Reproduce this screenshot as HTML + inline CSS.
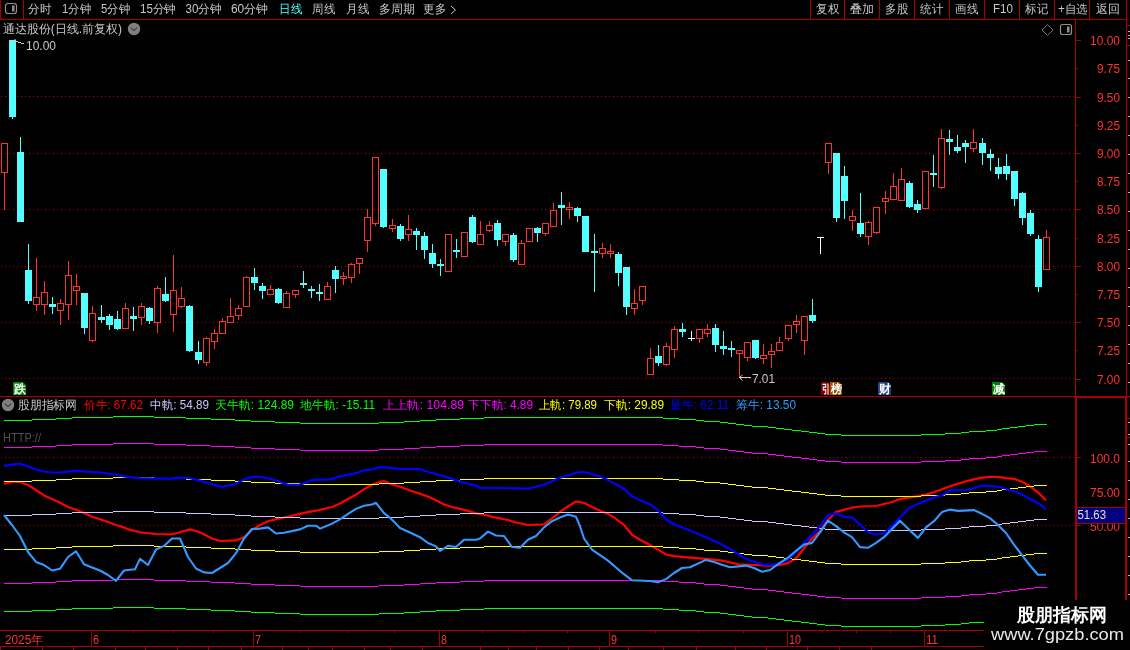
<!DOCTYPE html>
<html><head><meta charset="utf-8">
<style>
html,body{margin:0;padding:0;background:#000;width:1130px;height:650px;overflow:hidden}
svg{display:block}
text{font-family:"Liberation Sans",sans-serif;-webkit-font-smoothing:antialiased;will-change:transform;}
</style></head><body>
<svg width="1130" height="650" viewBox="0 0 1130 650">
<rect width="1130" height="650" fill="#000"/>
<line x1="1" y1="96.5" x2="1075" y2="96.5" stroke="#b40000" stroke-width="1" stroke-dasharray="1 3"/>
<line x1="1" y1="153.5" x2="1075" y2="153.5" stroke="#b40000" stroke-width="1" stroke-dasharray="1 3"/>
<line x1="1" y1="209.5" x2="1075" y2="209.5" stroke="#b40000" stroke-width="1" stroke-dasharray="1 3"/>
<line x1="1" y1="266.5" x2="1075" y2="266.5" stroke="#b40000" stroke-width="1" stroke-dasharray="1 3"/>
<line x1="1" y1="322.5" x2="1075" y2="322.5" stroke="#b40000" stroke-width="1" stroke-dasharray="1 3"/>
<line x1="1" y1="378.5" x2="1075" y2="378.5" stroke="#b40000" stroke-width="1" stroke-dasharray="1 3"/>
<line x1="1" y1="457.5" x2="1075" y2="457.5" stroke="#b40000" stroke-width="1" stroke-dasharray="1 3"/>
<line x1="1" y1="525.5" x2="1075" y2="525.5" stroke="#b40000" stroke-width="1" stroke-dasharray="1 3"/>
<rect x="4.0" y="172" width="1" height="38" fill="#ff3232"/>
<rect x="1.5" y="143.5" width="6" height="29" fill="none" stroke="#ff3232" stroke-width="1"/>
<rect x="12.0" y="40" width="1" height="79" fill="#54ffff"/>
<rect x="9" y="40" width="7" height="77" fill="#54ffff"/>
<rect x="20.0" y="137" width="1" height="85" fill="#54ffff"/>
<rect x="17" y="152" width="7" height="70" fill="#54ffff"/>
<rect x="28.0" y="244" width="1" height="60" fill="#54ffff"/>
<rect x="25" y="270" width="7" height="31" fill="#54ffff"/>
<rect x="36.0" y="258" width="1" height="39" fill="#ff3232"/>
<rect x="36.0" y="304" width="1" height="7" fill="#ff3232"/>
<rect x="33.5" y="297.5" width="6" height="7" fill="none" stroke="#ff3232" stroke-width="1"/>
<rect x="44.0" y="281" width="1" height="11" fill="#ff3232"/>
<rect x="44.0" y="304" width="1" height="11" fill="#ff3232"/>
<rect x="41.5" y="292.5" width="6" height="12" fill="none" stroke="#ff3232" stroke-width="1"/>
<rect x="52.0" y="297" width="1" height="17" fill="#54ffff"/>
<rect x="49" y="304" width="7" height="3" fill="#54ffff"/>
<rect x="60.0" y="299" width="1" height="4" fill="#ff3232"/>
<rect x="60.0" y="310" width="1" height="15" fill="#ff3232"/>
<rect x="57.5" y="303.5" width="6" height="7" fill="none" stroke="#ff3232" stroke-width="1"/>
<rect x="68.0" y="261" width="1" height="14" fill="#ff3232"/>
<rect x="68.0" y="304" width="1" height="16" fill="#ff3232"/>
<rect x="65.5" y="275.5" width="6" height="29" fill="none" stroke="#ff3232" stroke-width="1"/>
<rect x="76.0" y="274" width="1" height="12" fill="#ff3232"/>
<rect x="76.0" y="290" width="1" height="15" fill="#ff3232"/>
<rect x="73.5" y="286.5" width="6" height="4" fill="none" stroke="#ff3232" stroke-width="1"/>
<rect x="84.0" y="293" width="1" height="41" fill="#54ffff"/>
<rect x="81" y="293" width="7" height="35" fill="#54ffff"/>
<rect x="92.0" y="306" width="1" height="7" fill="#ff3232"/>
<rect x="92.0" y="340" width="1" height="2" fill="#ff3232"/>
<rect x="89.5" y="313.5" width="6" height="27" fill="none" stroke="#ff3232" stroke-width="1"/>
<rect x="101.0" y="305" width="1" height="18" fill="#54ffff"/>
<rect x="98" y="317" width="7" height="3" fill="#54ffff"/>
<rect x="109.0" y="314" width="1" height="16" fill="#54ffff"/>
<rect x="106" y="316" width="7" height="9" fill="#54ffff"/>
<rect x="117.0" y="311" width="1" height="19" fill="#54ffff"/>
<rect x="114" y="319" width="7" height="10" fill="#54ffff"/>
<rect x="125.0" y="303" width="1" height="5" fill="#ff3232"/>
<rect x="122.5" y="308.5" width="6" height="20" fill="none" stroke="#ff3232" stroke-width="1"/>
<rect x="133.0" y="307" width="1" height="24" fill="#54ffff"/>
<rect x="130" y="316" width="7" height="3" fill="#54ffff"/>
<rect x="141.0" y="303" width="1" height="3" fill="#ff3232"/>
<rect x="141.0" y="317" width="1" height="8" fill="#ff3232"/>
<rect x="138.5" y="306.5" width="6" height="11" fill="none" stroke="#ff3232" stroke-width="1"/>
<rect x="149.0" y="307" width="1" height="17" fill="#54ffff"/>
<rect x="146" y="308" width="7" height="13" fill="#54ffff"/>
<rect x="157.0" y="286" width="1" height="2" fill="#ff3232"/>
<rect x="157.0" y="322" width="1" height="11" fill="#ff3232"/>
<rect x="154.5" y="288.5" width="6" height="34" fill="none" stroke="#ff3232" stroke-width="1"/>
<rect x="165.0" y="277" width="1" height="25" fill="#54ffff"/>
<rect x="162" y="294" width="7" height="7" fill="#54ffff"/>
<rect x="173.0" y="255" width="1" height="35" fill="#ff3232"/>
<rect x="173.0" y="314" width="1" height="18" fill="#ff3232"/>
<rect x="170.5" y="290.5" width="6" height="24" fill="none" stroke="#ff3232" stroke-width="1"/>
<rect x="181.0" y="287" width="1" height="11" fill="#ff3232"/>
<rect x="181.0" y="306" width="1" height="2" fill="#ff3232"/>
<rect x="178.5" y="298.5" width="6" height="8" fill="none" stroke="#ff3232" stroke-width="1"/>
<rect x="189.0" y="305" width="1" height="47" fill="#54ffff"/>
<rect x="186" y="306" width="7" height="45" fill="#54ffff"/>
<rect x="198.0" y="341" width="1" height="23" fill="#54ffff"/>
<rect x="195" y="352" width="7" height="8" fill="#54ffff"/>
<rect x="206.0" y="337" width="1" height="1" fill="#ff3232"/>
<rect x="206.0" y="362" width="1" height="4" fill="#ff3232"/>
<rect x="203.5" y="338.5" width="6" height="24" fill="none" stroke="#ff3232" stroke-width="1"/>
<rect x="214.0" y="329" width="1" height="4" fill="#ff3232"/>
<rect x="214.0" y="341" width="1" height="8" fill="#ff3232"/>
<rect x="211.5" y="333.5" width="6" height="8" fill="none" stroke="#ff3232" stroke-width="1"/>
<rect x="222.0" y="318" width="1" height="3" fill="#ff3232"/>
<rect x="222.0" y="333" width="1" height="1" fill="#ff3232"/>
<rect x="219.5" y="321.5" width="6" height="12" fill="none" stroke="#ff3232" stroke-width="1"/>
<rect x="230.0" y="298" width="1" height="18" fill="#ff3232"/>
<rect x="230.0" y="322" width="1" height="1" fill="#ff3232"/>
<rect x="227.5" y="316.5" width="6" height="6" fill="none" stroke="#ff3232" stroke-width="1"/>
<rect x="238.0" y="305" width="1" height="3" fill="#ff3232"/>
<rect x="238.0" y="315" width="1" height="5" fill="#ff3232"/>
<rect x="235.5" y="308.5" width="6" height="7" fill="none" stroke="#ff3232" stroke-width="1"/>
<rect x="246.0" y="276" width="1" height="1" fill="#ff3232"/>
<rect x="243.5" y="277.5" width="6" height="29" fill="none" stroke="#ff3232" stroke-width="1"/>
<rect x="254.0" y="268" width="1" height="22" fill="#54ffff"/>
<rect x="251" y="277" width="7" height="6" fill="#54ffff"/>
<rect x="262.0" y="283" width="1" height="16" fill="#54ffff"/>
<rect x="259" y="286" width="7" height="5" fill="#54ffff"/>
<rect x="270.0" y="285" width="1" height="4" fill="#ff3232"/>
<rect x="267.5" y="289.5" width="6" height="5" fill="none" stroke="#ff3232" stroke-width="1"/>
<rect x="278.0" y="288" width="1" height="16" fill="#54ffff"/>
<rect x="275" y="289" width="7" height="14" fill="#54ffff"/>
<rect x="286.0" y="291" width="1" height="2" fill="#ff3232"/>
<rect x="286.0" y="307" width="1" height="1" fill="#ff3232"/>
<rect x="283.5" y="293.5" width="6" height="14" fill="none" stroke="#ff3232" stroke-width="1"/>
<rect x="295.0" y="294" width="1" height="4" fill="#ff3232"/>
<rect x="292.5" y="290.5" width="6" height="4" fill="none" stroke="#ff3232" stroke-width="1"/>
<rect x="303.0" y="271" width="1" height="17" fill="#54ffff"/>
<rect x="300" y="283" width="7" height="2" fill="#54ffff"/>
<rect x="311.0" y="286" width="1" height="12" fill="#54ffff"/>
<rect x="308" y="289" width="7" height="2" fill="#54ffff"/>
<rect x="319.0" y="284" width="1" height="17" fill="#54ffff"/>
<rect x="316" y="292" width="7" height="2" fill="#54ffff"/>
<rect x="327.0" y="282" width="1" height="4" fill="#ff3232"/>
<rect x="324.5" y="286.5" width="6" height="13" fill="none" stroke="#ff3232" stroke-width="1"/>
<rect x="335.0" y="266" width="1" height="27" fill="#54ffff"/>
<rect x="332" y="270" width="7" height="9" fill="#54ffff"/>
<rect x="343.0" y="272" width="1" height="4" fill="#ff3232"/>
<rect x="343.0" y="278" width="1" height="7" fill="#ff3232"/>
<rect x="340.5" y="276.5" width="6" height="2" fill="none" stroke="#ff3232" stroke-width="1"/>
<rect x="351.0" y="263" width="1" height="1" fill="#ff3232"/>
<rect x="351.0" y="277" width="1" height="6" fill="#ff3232"/>
<rect x="348.5" y="264.5" width="6" height="13" fill="none" stroke="#ff3232" stroke-width="1"/>
<rect x="359.0" y="263" width="1" height="11" fill="#ff3232"/>
<rect x="356.5" y="258.5" width="6" height="5" fill="none" stroke="#ff3232" stroke-width="1"/>
<rect x="367.0" y="209" width="1" height="8" fill="#ff3232"/>
<rect x="367.0" y="240" width="1" height="12" fill="#ff3232"/>
<rect x="364.5" y="217.5" width="6" height="23" fill="none" stroke="#ff3232" stroke-width="1"/>
<rect x="375.0" y="223" width="1" height="3" fill="#ff3232"/>
<rect x="372.5" y="157.5" width="6" height="66" fill="none" stroke="#ff3232" stroke-width="1"/>
<rect x="383.0" y="169" width="1" height="59" fill="#54ffff"/>
<rect x="380" y="169" width="7" height="58" fill="#54ffff"/>
<rect x="392.0" y="219" width="1" height="6" fill="#ff3232"/>
<rect x="392.0" y="228" width="1" height="4" fill="#ff3232"/>
<rect x="389.5" y="225.5" width="6" height="3" fill="none" stroke="#ff3232" stroke-width="1"/>
<rect x="400.0" y="224" width="1" height="17" fill="#54ffff"/>
<rect x="397" y="226" width="7" height="13" fill="#54ffff"/>
<rect x="408.0" y="215" width="1" height="14" fill="#ff3232"/>
<rect x="408.0" y="234" width="1" height="7" fill="#ff3232"/>
<rect x="405.5" y="229.5" width="6" height="5" fill="none" stroke="#ff3232" stroke-width="1"/>
<rect x="416.0" y="228" width="1" height="22" fill="#54ffff"/>
<rect x="413" y="231" width="7" height="4" fill="#54ffff"/>
<rect x="424.0" y="232" width="1" height="27" fill="#54ffff"/>
<rect x="421" y="236" width="7" height="14" fill="#54ffff"/>
<rect x="432.0" y="244" width="1" height="24" fill="#54ffff"/>
<rect x="429" y="253" width="7" height="11" fill="#54ffff"/>
<rect x="440.0" y="259" width="1" height="17" fill="#54ffff"/>
<rect x="437" y="264" width="7" height="2" fill="#54ffff"/>
<rect x="448.0" y="271" width="1" height="1" fill="#ff3232"/>
<rect x="445.5" y="234.5" width="6" height="37" fill="none" stroke="#ff3232" stroke-width="1"/>
<rect x="456.0" y="239" width="1" height="19" fill="#54ffff"/>
<rect x="453" y="250" width="7" height="2" fill="#54ffff"/>
<rect x="464.0" y="256" width="1" height="1" fill="#ff3232"/>
<rect x="461.5" y="232.5" width="6" height="24" fill="none" stroke="#ff3232" stroke-width="1"/>
<rect x="472.0" y="215" width="1" height="28" fill="#54ffff"/>
<rect x="469" y="217" width="7" height="25" fill="#54ffff"/>
<rect x="480.0" y="221" width="1" height="13" fill="#ff3232"/>
<rect x="480.0" y="244" width="1" height="1" fill="#ff3232"/>
<rect x="477.5" y="234.5" width="6" height="10" fill="none" stroke="#ff3232" stroke-width="1"/>
<rect x="489.0" y="221" width="1" height="4" fill="#ff3232"/>
<rect x="489.0" y="230" width="1" height="2" fill="#ff3232"/>
<rect x="486.5" y="225.5" width="6" height="5" fill="none" stroke="#ff3232" stroke-width="1"/>
<rect x="497.0" y="220" width="1" height="26" fill="#54ffff"/>
<rect x="494" y="223" width="7" height="17" fill="#54ffff"/>
<rect x="505.0" y="241" width="1" height="5" fill="#ff3232"/>
<rect x="502.5" y="234.5" width="6" height="7" fill="none" stroke="#ff3232" stroke-width="1"/>
<rect x="513.0" y="233" width="1" height="29" fill="#54ffff"/>
<rect x="510" y="235" width="7" height="25" fill="#54ffff"/>
<rect x="521.0" y="240" width="1" height="3" fill="#ff3232"/>
<rect x="518.5" y="243.5" width="6" height="21" fill="none" stroke="#ff3232" stroke-width="1"/>
<rect x="526.5" y="228.5" width="6" height="13" fill="none" stroke="#ff3232" stroke-width="1"/>
<rect x="537.0" y="227" width="1" height="15" fill="#54ffff"/>
<rect x="534" y="228" width="7" height="5" fill="#54ffff"/>
<rect x="545.0" y="233" width="1" height="3" fill="#ff3232"/>
<rect x="542.5" y="223.5" width="6" height="10" fill="none" stroke="#ff3232" stroke-width="1"/>
<rect x="553.0" y="203" width="1" height="7" fill="#ff3232"/>
<rect x="550.5" y="210.5" width="6" height="16" fill="none" stroke="#ff3232" stroke-width="1"/>
<rect x="561.0" y="192" width="1" height="33" fill="#54ffff"/>
<rect x="558" y="205" width="7" height="3" fill="#54ffff"/>
<rect x="569.0" y="202" width="1" height="5" fill="#ff3232"/>
<rect x="569.0" y="209" width="1" height="10" fill="#ff3232"/>
<rect x="566.5" y="207.5" width="6" height="2" fill="none" stroke="#ff3232" stroke-width="1"/>
<rect x="577.0" y="207" width="1" height="15" fill="#54ffff"/>
<rect x="574" y="208" width="7" height="8" fill="#54ffff"/>
<rect x="585.0" y="216" width="1" height="36" fill="#54ffff"/>
<rect x="582" y="216" width="7" height="36" fill="#54ffff"/>
<rect x="594.0" y="234" width="1" height="58" fill="#54ffff"/>
<rect x="591" y="251" width="7" height="2" fill="#54ffff"/>
<rect x="602.0" y="243" width="1" height="5" fill="#ff3232"/>
<rect x="602.0" y="253" width="1" height="5" fill="#ff3232"/>
<rect x="599.5" y="248.5" width="6" height="5" fill="none" stroke="#ff3232" stroke-width="1"/>
<rect x="610.0" y="244" width="1" height="7" fill="#ff3232"/>
<rect x="610.0" y="253" width="1" height="5" fill="#ff3232"/>
<rect x="607.5" y="251.5" width="6" height="2" fill="none" stroke="#ff3232" stroke-width="1"/>
<rect x="618.0" y="252" width="1" height="34" fill="#54ffff"/>
<rect x="615" y="254" width="7" height="19" fill="#54ffff"/>
<rect x="626.0" y="267" width="1" height="48" fill="#54ffff"/>
<rect x="623" y="267" width="7" height="40" fill="#54ffff"/>
<rect x="634.0" y="289" width="1" height="14" fill="#ff3232"/>
<rect x="634.0" y="308" width="1" height="7" fill="#ff3232"/>
<rect x="631.5" y="303.5" width="6" height="5" fill="none" stroke="#ff3232" stroke-width="1"/>
<rect x="642.0" y="300" width="1" height="5" fill="#ff3232"/>
<rect x="639.5" y="286.5" width="6" height="14" fill="none" stroke="#ff3232" stroke-width="1"/>
<rect x="650.0" y="348" width="1" height="10" fill="#ff3232"/>
<rect x="647.5" y="358.5" width="6" height="16" fill="none" stroke="#ff3232" stroke-width="1"/>
<rect x="658.0" y="345" width="1" height="21" fill="#54ffff"/>
<rect x="655" y="356" width="7" height="7" fill="#54ffff"/>
<rect x="666.0" y="343" width="1" height="3" fill="#ff3232"/>
<rect x="666.0" y="364" width="1" height="2" fill="#ff3232"/>
<rect x="663.5" y="346.5" width="6" height="18" fill="none" stroke="#ff3232" stroke-width="1"/>
<rect x="674.0" y="326" width="1" height="3" fill="#ff3232"/>
<rect x="674.0" y="349" width="1" height="9" fill="#ff3232"/>
<rect x="671.5" y="329.5" width="6" height="20" fill="none" stroke="#ff3232" stroke-width="1"/>
<rect x="682.0" y="323" width="1" height="14" fill="#54ffff"/>
<rect x="679" y="329" width="7" height="3" fill="#54ffff"/>
<rect x="691.0" y="331" width="1" height="10" fill="#ffffff"/>
<rect x="688" y="338" width="7" height="1" fill="#ffffff"/>
<rect x="699.0" y="338" width="1" height="5" fill="#ff3232"/>
<rect x="696.5" y="329.5" width="6" height="9" fill="none" stroke="#ff3232" stroke-width="1"/>
<rect x="707.0" y="324" width="1" height="5" fill="#ff3232"/>
<rect x="707.0" y="333" width="1" height="4" fill="#ff3232"/>
<rect x="704.5" y="329.5" width="6" height="4" fill="none" stroke="#ff3232" stroke-width="1"/>
<rect x="715.0" y="324" width="1" height="28" fill="#54ffff"/>
<rect x="712" y="328" width="7" height="17" fill="#54ffff"/>
<rect x="723.0" y="331" width="1" height="24" fill="#54ffff"/>
<rect x="720" y="346" width="7" height="3" fill="#54ffff"/>
<rect x="731.0" y="341" width="1" height="16" fill="#54ffff"/>
<rect x="728" y="348" width="7" height="2" fill="#54ffff"/>
<rect x="739.0" y="353" width="1" height="25" fill="#ff3232"/>
<rect x="736.5" y="350.5" width="6" height="3" fill="none" stroke="#ff3232" stroke-width="1"/>
<rect x="747.0" y="357" width="1" height="4" fill="#ff3232"/>
<rect x="744.5" y="342.5" width="6" height="15" fill="none" stroke="#ff3232" stroke-width="1"/>
<rect x="755.0" y="340" width="1" height="19" fill="#54ffff"/>
<rect x="752" y="340" width="7" height="18" fill="#54ffff"/>
<rect x="763.0" y="344" width="1" height="11" fill="#ff3232"/>
<rect x="763.0" y="358" width="1" height="6" fill="#ff3232"/>
<rect x="760.5" y="355.5" width="6" height="3" fill="none" stroke="#ff3232" stroke-width="1"/>
<rect x="771.0" y="344" width="1" height="7" fill="#ff3232"/>
<rect x="771.0" y="354" width="1" height="14" fill="#ff3232"/>
<rect x="768.5" y="351.5" width="6" height="3" fill="none" stroke="#ff3232" stroke-width="1"/>
<rect x="779.0" y="337" width="1" height="5" fill="#ff3232"/>
<rect x="776.5" y="342.5" width="6" height="8" fill="none" stroke="#ff3232" stroke-width="1"/>
<rect x="788.0" y="338" width="1" height="3" fill="#ff3232"/>
<rect x="785.5" y="325.5" width="6" height="13" fill="none" stroke="#ff3232" stroke-width="1"/>
<rect x="796.0" y="315" width="1" height="6" fill="#ff3232"/>
<rect x="796.0" y="324" width="1" height="9" fill="#ff3232"/>
<rect x="793.5" y="321.5" width="6" height="3" fill="none" stroke="#ff3232" stroke-width="1"/>
<rect x="804.0" y="340" width="1" height="15" fill="#ff3232"/>
<rect x="801.5" y="316.5" width="6" height="24" fill="none" stroke="#ff3232" stroke-width="1"/>
<rect x="812.0" y="299" width="1" height="24" fill="#54ffff"/>
<rect x="809" y="315" width="7" height="6" fill="#54ffff"/>
<rect x="820.0" y="237" width="1" height="17" fill="#ffffff"/>
<rect x="817" y="237" width="7" height="1" fill="#ffffff"/>
<rect x="828.0" y="162" width="1" height="12" fill="#ff3232"/>
<rect x="825.5" y="143.5" width="6" height="19" fill="none" stroke="#ff3232" stroke-width="1"/>
<rect x="836.0" y="153" width="1" height="69" fill="#54ffff"/>
<rect x="833" y="153" width="7" height="65" fill="#54ffff"/>
<rect x="844.0" y="166" width="1" height="53" fill="#54ffff"/>
<rect x="841" y="176" width="7" height="25" fill="#54ffff"/>
<rect x="852.0" y="210" width="1" height="6" fill="#ff3232"/>
<rect x="852.0" y="220" width="1" height="11" fill="#ff3232"/>
<rect x="849.5" y="216.5" width="6" height="4" fill="none" stroke="#ff3232" stroke-width="1"/>
<rect x="860.0" y="193" width="1" height="44" fill="#54ffff"/>
<rect x="857" y="223" width="7" height="11" fill="#54ffff"/>
<rect x="868.0" y="221" width="1" height="1" fill="#ff3232"/>
<rect x="868.0" y="236" width="1" height="9" fill="#ff3232"/>
<rect x="865.5" y="222.5" width="6" height="14" fill="none" stroke="#ff3232" stroke-width="1"/>
<rect x="876.0" y="232" width="1" height="2" fill="#ff3232"/>
<rect x="873.5" y="207.5" width="6" height="25" fill="none" stroke="#ff3232" stroke-width="1"/>
<rect x="885.0" y="191" width="1" height="7" fill="#ff3232"/>
<rect x="885.0" y="201" width="1" height="13" fill="#ff3232"/>
<rect x="882.5" y="198.5" width="6" height="3" fill="none" stroke="#ff3232" stroke-width="1"/>
<rect x="893.0" y="173" width="1" height="13" fill="#ff3232"/>
<rect x="893.0" y="199" width="1" height="1" fill="#ff3232"/>
<rect x="890.5" y="186.5" width="6" height="13" fill="none" stroke="#ff3232" stroke-width="1"/>
<rect x="901.0" y="168" width="1" height="11" fill="#ff3232"/>
<rect x="898.5" y="179.5" width="6" height="21" fill="none" stroke="#ff3232" stroke-width="1"/>
<rect x="909.0" y="181" width="1" height="27" fill="#54ffff"/>
<rect x="906" y="183" width="7" height="24" fill="#54ffff"/>
<rect x="917.0" y="200" width="1" height="13" fill="#54ffff"/>
<rect x="914" y="204" width="7" height="6" fill="#54ffff"/>
<rect x="922.5" y="171.5" width="6" height="37" fill="none" stroke="#ff3232" stroke-width="1"/>
<rect x="933.0" y="155" width="1" height="32" fill="#54ffff"/>
<rect x="930" y="173" width="7" height="2" fill="#54ffff"/>
<rect x="941.0" y="129" width="1" height="9" fill="#ff3232"/>
<rect x="941.0" y="187" width="1" height="2" fill="#ff3232"/>
<rect x="938.5" y="138.5" width="6" height="49" fill="none" stroke="#ff3232" stroke-width="1"/>
<rect x="949.0" y="130" width="1" height="25" fill="#54ffff"/>
<rect x="946" y="139" width="7" height="3" fill="#54ffff"/>
<rect x="957.0" y="135" width="1" height="18" fill="#54ffff"/>
<rect x="954" y="147" width="7" height="4" fill="#54ffff"/>
<rect x="965.0" y="140" width="1" height="23" fill="#54ffff"/>
<rect x="962" y="143" width="7" height="4" fill="#54ffff"/>
<rect x="973.0" y="129" width="1" height="13" fill="#ff3232"/>
<rect x="973.0" y="148" width="1" height="4" fill="#ff3232"/>
<rect x="970.5" y="142.5" width="6" height="6" fill="none" stroke="#ff3232" stroke-width="1"/>
<rect x="982.0" y="138" width="1" height="27" fill="#54ffff"/>
<rect x="979" y="143" width="7" height="10" fill="#54ffff"/>
<rect x="990.0" y="149" width="1" height="22" fill="#54ffff"/>
<rect x="987" y="154" width="7" height="4" fill="#54ffff"/>
<rect x="998.0" y="158" width="1" height="21" fill="#54ffff"/>
<rect x="995" y="167" width="7" height="7" fill="#54ffff"/>
<rect x="1006.0" y="154" width="1" height="26" fill="#54ffff"/>
<rect x="1003" y="166" width="7" height="8" fill="#54ffff"/>
<rect x="1014.0" y="171" width="1" height="35" fill="#54ffff"/>
<rect x="1011" y="171" width="7" height="28" fill="#54ffff"/>
<rect x="1022.0" y="192" width="1" height="33" fill="#54ffff"/>
<rect x="1019" y="193" width="7" height="25" fill="#54ffff"/>
<rect x="1030.0" y="210" width="1" height="26" fill="#54ffff"/>
<rect x="1027" y="213" width="7" height="21" fill="#54ffff"/>
<rect x="1038.0" y="235" width="1" height="57" fill="#54ffff"/>
<rect x="1035" y="239" width="7" height="48" fill="#54ffff"/>
<rect x="1046.0" y="230" width="1" height="7" fill="#ff3232"/>
<rect x="1043.5" y="237.5" width="6" height="32" fill="none" stroke="#ff3232" stroke-width="1"/>
<polyline points="4,483.8 12,481.9 20,482.0 28,485.0 36,490.0 44,495.4 52,499.0 60,502.8 68,507.0 76,509.7 84,513.0 92,516.8 100,519.3 108,522.0 116,525.0 124,527.4 130,529.9 140,532.3 156,534.0 172,534.3 180,532.3 190,529.4 200,532.3 212,538.5 220,541.0 236,540.4 244,537.2 252,529.9 260,525.0 268,521.2 276,519.3 284,517.5 292,515.8 300,513.9 308,512.1 316,510.7 324,508.9 332,507.0 340,503.5 348,499.0 356,494.7 364,489.2 372,484.8 380,481.9 384,481.1 390,483.8 400,486.8 410,490.5 420,493.7 428,496.6 436,500.3 444,504.5 452,507.0 460,508.9 468,510.9 476,513.4 484,514.6 492,516.8 500,518.3 508,520.0 516,522.5 528,525.0 544,524.4 552,518.3 560,511.9 568,506.5 576,501.5 584,502.8 592,507.0 600,510.7 608,513.9 616,518.8 624,525.0 632,534.8 640,539.7 650,545.0 658,549.6 666,554.5 674,556.2 690,557.7 706,558.9 722,560.6 738,564.3 754,565.0 770,565.6 780,565.0 788,563.1 796,558.2 804,548.3 812,538.5 820,531.0 828,520.0 836,511.9 844,509.7 852,507.7 860,506.5 876,506.0 884,504.0 892,502.0 900,499.0 910,497.3 918,496.1 926,494.6 934,492.2 942,489.2 950,486.3 958,483.8 966,481.3 974,479.4 982,477.6 990,476.9 998,476.9 1006,478.1 1014,478.9 1022,481.8 1030,486.3 1038,492.4 1046,500.3" fill="none" stroke="#ff0000" stroke-width="2.2" stroke-linejoin="round"/>
<path d="M4,420.5H32M32,419.5H56M56,418.5H72M72,417.5H113M113,416.5H154M154,417.5H186M186,418.5H211M211,419.5H235M235,420.5H251M251,421.5H275M275,422.5H300M300,423.5H379M379,422.5H404M404,421.5H420M420,420.5H436M436,419.5H460M460,418.5H484M484,417.5H663M663,418.5H679M679,419.5H696M696,420.5H704M704,421.5H720M720,422.5H728M728,423.5H736M736,424.5H744M744,425.5H752M752,426.5H768M768,427.5H776M776,428.5H784M784,429.5H792M792,430.5H801M801,431.5H809M809,432.5H817M817,433.5H825M825,434.5H841M841,435.5H921M921,434.5H945M945,433.5H961M961,432.5H969M969,431.5H986M986,430.5H997M997,429.5H1002M1002,428.5H1010M1010,427.5H1018M1018,426.5H1026M1026,425.5H1034M1034,424.5H1047" stroke="#00ff00" stroke-width="1" shape-rendering="crispEdges" fill="none"/>
<path d="M4,447.5H32M32,446.5H56M56,445.5H72M72,444.5H113M113,443.5H154M154,444.5H186M186,445.5H211M211,446.5H235M235,447.5H251M251,448.5H275M275,449.5H300M300,450.5H379M379,449.5H404M404,448.5H420M420,447.5H436M436,446.5H460M460,445.5H484M484,444.5H663M663,445.5H679M679,446.5H696M696,447.5H704M704,448.5H720M720,449.5H728M728,450.5H736M736,451.5H744M744,452.5H752M752,453.5H768M768,454.5H776M776,455.5H784M784,456.5H792M792,457.5H801M801,458.5H809M809,459.5H817M817,460.5H825M825,461.5H841M841,462.5H921M921,461.5H945M945,460.5H961M961,459.5H969M969,458.5H986M986,457.5H997M997,456.5H1002M1002,455.5H1010M1010,454.5H1018M1018,453.5H1026M1026,452.5H1034M1034,451.5H1047" stroke="#ff00ff" stroke-width="1" shape-rendering="crispEdges" fill="none"/>
<path d="M4,481.5H32M32,480.5H56M56,479.5H72M72,478.5H113M113,477.5H154M154,478.5H186M186,479.5H211M211,480.5H235M235,481.5H251M251,482.5H275M275,483.5H300M300,484.5H379M379,483.5H404M404,482.5H420M420,481.5H436M436,480.5H460M460,479.5H484M484,478.5H663M663,479.5H679M679,480.5H696M696,481.5H704M704,482.5H720M720,483.5H728M728,484.5H736M736,485.5H744M744,486.5H752M752,487.5H768M768,488.5H776M776,489.5H784M784,490.5H792M792,491.5H801M801,492.5H809M809,493.5H817M817,494.5H825M825,495.5H841M841,496.5H921M921,495.5H945M945,494.5H961M961,493.5H969M969,492.5H986M986,491.5H997M997,490.5H1002M1002,489.5H1010M1010,488.5H1018M1018,487.5H1026M1026,486.5H1034M1034,485.5H1047" stroke="#ffff00" stroke-width="1" shape-rendering="crispEdges" fill="none"/>
<path d="M4,515.5H32M32,514.5H56M56,513.5H72M72,512.5H113M113,511.5H154M154,512.5H186M186,513.5H211M211,514.5H235M235,515.5H251M251,516.5H275M275,517.5H300M300,518.5H379M379,517.5H404M404,516.5H420M420,515.5H436M436,514.5H460M460,513.5H484M484,512.5H663M663,513.5H679M679,514.5H696M696,515.5H704M704,516.5H720M720,517.5H728M728,518.5H736M736,519.5H744M744,520.5H752M752,521.5H768M768,522.5H776M776,523.5H784M784,524.5H792M792,525.5H801M801,526.5H809M809,527.5H817M817,528.5H825M825,529.5H841M841,530.5H921M921,529.5H945M945,528.5H961M961,527.5H969M969,526.5H986M986,525.5H997M997,524.5H1002M1002,523.5H1010M1010,522.5H1018M1018,521.5H1026M1026,520.5H1034M1034,519.5H1047" stroke="#c8c8ff" stroke-width="1" shape-rendering="crispEdges" fill="none"/>
<path d="M4,549.5H32M32,548.5H56M56,547.5H72M72,546.5H113M113,545.5H154M154,546.5H186M186,547.5H211M211,548.5H235M235,549.5H251M251,550.5H275M275,551.5H300M300,552.5H379M379,551.5H404M404,550.5H420M420,549.5H436M436,548.5H460M460,547.5H484M484,546.5H663M663,547.5H679M679,548.5H696M696,549.5H704M704,550.5H720M720,551.5H728M728,552.5H736M736,553.5H744M744,554.5H752M752,555.5H768M768,556.5H776M776,557.5H784M784,558.5H792M792,559.5H801M801,560.5H809M809,561.5H817M817,562.5H825M825,563.5H841M841,564.5H921M921,563.5H945M945,562.5H961M961,561.5H969M969,560.5H986M986,559.5H997M997,558.5H1002M1002,557.5H1010M1010,556.5H1018M1018,555.5H1026M1026,554.5H1034M1034,553.5H1047" stroke="#ffff00" stroke-width="1" shape-rendering="crispEdges" fill="none"/>
<path d="M4,583.5H32M32,582.5H56M56,581.5H72M72,580.5H113M113,579.5H154M154,580.5H186M186,581.5H211M211,582.5H235M235,583.5H251M251,584.5H275M275,585.5H300M300,586.5H379M379,585.5H404M404,584.5H420M420,583.5H436M436,582.5H460M460,581.5H484M484,580.5H663M663,581.5H679M679,582.5H696M696,583.5H704M704,584.5H720M720,585.5H728M728,586.5H736M736,587.5H744M744,588.5H752M752,589.5H768M768,590.5H776M776,591.5H784M784,592.5H792M792,593.5H801M801,594.5H809M809,595.5H817M817,596.5H825M825,597.5H841M841,598.5H921M921,597.5H945M945,596.5H961M961,595.5H969M969,594.5H986M986,593.5H997M997,592.5H1002M1002,591.5H1010M1010,590.5H1018M1018,589.5H1026M1026,588.5H1034M1034,587.5H1047" stroke="#ff00ff" stroke-width="1" shape-rendering="crispEdges" fill="none"/>
<path d="M4,611.5H32M32,610.5H56M56,609.5H72M72,608.5H113M113,607.5H154M154,608.5H186M186,609.5H211M211,610.5H235M235,611.5H251M251,612.5H275M275,613.5H300M300,614.5H379M379,613.5H404M404,612.5H420M420,611.5H436M436,610.5H460M460,609.5H484M484,608.5H663M663,609.5H679M679,610.5H696M696,611.5H704M704,612.5H720M720,613.5H728M728,614.5H736M736,615.5H744M744,616.5H752M752,617.5H768M768,618.5H776M776,619.5H784M784,620.5H792M792,621.5H801M801,622.5H809M809,623.5H817M817,624.5H825M825,625.5H841M841,626.5H921M921,625.5H945M945,624.5H961M961,623.5H969M969,622.5H986M986,621.5H997M997,620.5H1002M1002,619.5H1010M1010,618.5H1018M1018,617.5H1026M1026,616.5H1034M1034,615.5H1047" stroke="#00ff00" stroke-width="1" shape-rendering="crispEdges" fill="none"/>
<polyline points="4,465.8 12,464.6 20,463.9 28,466.3 36,469.5 44,471.5 52,472.5 60,472.5 68,471.5 76,470.8 84,471.5 92,472.0 100,472.5 108,473.7 116,474.5 124,476.4 130,477.2 140,478.2 156,478.7 172,478.7 180,477.7 190,478.2 200,480.6 212,484.3 222,486.8 236,483.8 244,479.4 252,476.9 260,476.9 270,478.7 280,481.9 288,484.8 300,484.8 312,479.9 330,479.4 340,476.4 356,473.2 364,470.3 372,469.5 380,467.1 390,467.8 400,468.8 420,469.0 428,472.0 436,474.0 444,476.4 452,478.9 460,481.9 468,483.8 476,485.5 480,488.0 500,488.0 528,488.7 544,484.8 560,477.7 576,472.7 584,472.0 600,476.4 608,480.1 616,484.3 624,489.2 632,496.1 640,500.3 650,504.2 658,510.2 666,519.3 674,524.2 690,530.6 706,537.2 714,541.0 722,544.6 738,553.7 746,558.7 754,561.9 762,564.3 770,565.0 780,563.1 788,559.4 796,552.0 804,542.9 812,534.8 820,526.2 828,515.1 836,513.4 844,516.8 852,517.5 860,524.4 868,532.3 876,534.8 884,533.0 892,526.2 900,517.5 910,507.5 918,504.0 926,500.8 934,497.3 942,495.4 950,490.4 966,490.0 974,488.0 982,485.5 990,486.0 998,486.8 1006,488.7 1014,491.2 1022,494.6 1030,499.0 1038,503.2 1046,508.9" fill="none" stroke="#0000ff" stroke-width="2.2" stroke-linejoin="round"/>
<polyline points="4,515.0 12,525.0 20,536.0 28,552.0 36,561.9 44,565.0 52,570.5 60,568.8 68,557.0 76,551.3 84,564.3 92,567.5 100,570.5 108,575.0 116,580.8 124,570.5 130,569.7 135,569.2 140,558.9 148,565.0 156,549.5 164,545.9 172,538.5 180,538.5 188,557.0 196,568.5 204,572.4 212,573.0 220,568.0 228,563.0 236,553.2 244,538.5 252,529.0 260,528.6 268,527.4 276,533.5 284,532.8 300,529.4 308,525.7 316,525.7 320,528.6 332,523.7 340,519.3 348,513.9 356,508.9 364,505.7 372,504.5 376,502.8 384,513.1 390,517.8 396,523.7 400,528.0 412,533.5 420,537.2 428,543.0 436,546.4 440,550.8 448,545.9 456,547.0 464,539.7 476,539.7 480,538.5 488,531.6 496,535.5 504,536.0 512,547.0 520,547.8 528,539.7 536,536.0 544,527.4 552,521.2 560,517.5 568,514.6 576,516.8 580,526.2 584,538.5 592,549.6 600,555.2 608,560.6 616,567.5 624,574.2 632,580.3 650,581.0 658,582.3 666,579.1 674,573.0 682,568.0 690,567.3 706,559.9 714,561.9 722,564.8 730,567.3 746,565.6 754,568.0 762,571.7 770,570.0 780,562.8 788,557.7 796,550.8 804,544.6 812,542.9 820,532.3 828,520.7 836,526.2 844,532.3 852,537.2 860,547.1 868,547.8 876,542.9 884,537.2 892,529.1 900,520.7 910,530.6 918,537.9 926,527.4 934,521.2 942,512.1 950,509.6 958,510.9 974,510.1 982,513.8 990,518.2 998,524.9 1006,533.0 1014,544.6 1022,555.2 1030,565.5 1038,574.8 1046,574.8" fill="none" stroke="#3399ff" stroke-width="2.1" stroke-linejoin="round"/>
<rect x="0" y="0" width="1" height="19" fill="#a80000"/>
<rect x="23" y="0" width="1" height="19" fill="#a80000"/>
<rect x="0" y="19" width="1127" height="1" fill="#a80000"/>
<rect x="5.5" y="3.5" width="11" height="10" rx="2.5" fill="none" stroke="#909090" stroke-width="1.2"/>
<rect x="12" y="5.5" width="2.5" height="6" fill="#909090"/>
<text x="28" y="13" fill="#c8c8c8" font-size="12" textLength="23" lengthAdjust="spacingAndGlyphs">分时</text>
<text x="62" y="13" fill="#c8c8c8" font-size="12" textLength="29" lengthAdjust="spacingAndGlyphs">1分钟</text>
<text x="101" y="13" fill="#c8c8c8" font-size="12" textLength="29" lengthAdjust="spacingAndGlyphs">5分钟</text>
<text x="140" y="13" fill="#c8c8c8" font-size="12" textLength="36" lengthAdjust="spacingAndGlyphs">15分钟</text>
<text x="185.5" y="13" fill="#c8c8c8" font-size="12" textLength="36" lengthAdjust="spacingAndGlyphs">30分钟</text>
<text x="231" y="13" fill="#c8c8c8" font-size="12" textLength="37" lengthAdjust="spacingAndGlyphs">60分钟</text>
<text x="279" y="13" fill="#54ffff" font-size="12" textLength="23" lengthAdjust="spacingAndGlyphs">日线</text>
<text x="312" y="13" fill="#c8c8c8" font-size="12" textLength="23" lengthAdjust="spacingAndGlyphs">周线</text>
<text x="346" y="13" fill="#c8c8c8" font-size="12" textLength="23" lengthAdjust="spacingAndGlyphs">月线</text>
<text x="379" y="13" fill="#c8c8c8" font-size="12" textLength="36" lengthAdjust="spacingAndGlyphs">多周期</text>
<text x="423" y="13" fill="#c8c8c8" font-size="12" textLength="23" lengthAdjust="spacingAndGlyphs">更多</text>
<polyline points="451,6 455.5,10 451,14" fill="none" stroke="#c8c8c8" stroke-width="1"/>
<rect x="810" y="0" width="1" height="19" fill="#a80000"/>
<rect x="844" y="0" width="1" height="19" fill="#a80000"/>
<rect x="879" y="0" width="1" height="19" fill="#a80000"/>
<rect x="914" y="0" width="1" height="19" fill="#a80000"/>
<rect x="949" y="0" width="1" height="19" fill="#a80000"/>
<rect x="984" y="0" width="1" height="19" fill="#a80000"/>
<rect x="1019" y="0" width="1" height="19" fill="#a80000"/>
<rect x="1054" y="0" width="1" height="19" fill="#a80000"/>
<rect x="1089" y="0" width="1" height="19" fill="#a80000"/>
<text x="816" y="13" fill="#c8c8c8" font-size="12" textLength="23" lengthAdjust="spacingAndGlyphs">复权</text>
<text x="850" y="13" fill="#c8c8c8" font-size="12" textLength="24" lengthAdjust="spacingAndGlyphs">叠加</text>
<text x="885" y="13" fill="#c8c8c8" font-size="12" textLength="23" lengthAdjust="spacingAndGlyphs">多股</text>
<text x="920" y="13" fill="#c8c8c8" font-size="12" textLength="23" lengthAdjust="spacingAndGlyphs">统计</text>
<text x="955" y="13" fill="#c8c8c8" font-size="12" textLength="23" lengthAdjust="spacingAndGlyphs">画线</text>
<text x="993" y="13" fill="#c8c8c8" font-size="12" textLength="20" lengthAdjust="spacingAndGlyphs">F10</text>
<text x="1025" y="13" fill="#c8c8c8" font-size="12" textLength="23" lengthAdjust="spacingAndGlyphs">标记</text>
<text x="1058" y="13" fill="#c8c8c8" font-size="12" textLength="30" lengthAdjust="spacingAndGlyphs">+自选</text>
<text x="1096" y="13" fill="#c8c8c8" font-size="12" textLength="24" lengthAdjust="spacingAndGlyphs">返回</text>
<text x="3" y="33" fill="#c8c8c8" font-size="12" textLength="119" lengthAdjust="spacingAndGlyphs">通达股份(日线.前复权)</text>
<circle cx="134" cy="29" r="6.2" fill="#808080"/>
<polyline points="130.8,27.6 134,30.6 137.2,27.6" fill="none" stroke="#1a1a1a" stroke-width="1"/>
<polygon points="1047.5,24.5 1053,30 1047.5,35.5 1042,30" fill="none" stroke="#909090" stroke-width="0.8"/>
<rect x="1060.5" y="24.5" width="11" height="10" rx="2" fill="none" stroke="#909090" stroke-width="1.2"/>
<rect x="1067" y="26.5" width="2.5" height="6" fill="#909090"/>
<rect x="1075" y="19" width="1" height="611" fill="#a80000"/>
<rect x="1126" y="0" width="1" height="600" fill="#a80000"/>
<rect x="1076" y="40" width="5" height="1" fill="#a80000"/>
<text x="1120" y="45" fill="#ff3232" font-size="12" text-anchor="end" textLength="30" lengthAdjust="spacingAndGlyphs">10.00</text>
<rect x="1076" y="68" width="2" height="1" fill="#a80000"/>
<text x="1120" y="73" fill="#ff3232" font-size="12" text-anchor="end" textLength="23" lengthAdjust="spacingAndGlyphs">9.75</text>
<rect x="1076" y="97" width="5" height="1" fill="#a80000"/>
<text x="1120" y="102" fill="#ff3232" font-size="12" text-anchor="end" textLength="23" lengthAdjust="spacingAndGlyphs">9.50</text>
<rect x="1076" y="125" width="2" height="1" fill="#a80000"/>
<text x="1120" y="130" fill="#ff3232" font-size="12" text-anchor="end" textLength="23" lengthAdjust="spacingAndGlyphs">9.25</text>
<rect x="1076" y="153" width="5" height="1" fill="#a80000"/>
<text x="1120" y="158" fill="#ff3232" font-size="12" text-anchor="end" textLength="23" lengthAdjust="spacingAndGlyphs">9.00</text>
<rect x="1076" y="181" width="2" height="1" fill="#a80000"/>
<text x="1120" y="186" fill="#ff3232" font-size="12" text-anchor="end" textLength="23" lengthAdjust="spacingAndGlyphs">8.75</text>
<rect x="1076" y="209" width="5" height="1" fill="#a80000"/>
<text x="1120" y="214" fill="#ff3232" font-size="12" text-anchor="end" textLength="23" lengthAdjust="spacingAndGlyphs">8.50</text>
<rect x="1076" y="238" width="2" height="1" fill="#a80000"/>
<text x="1120" y="243" fill="#ff3232" font-size="12" text-anchor="end" textLength="23" lengthAdjust="spacingAndGlyphs">8.25</text>
<rect x="1076" y="266" width="5" height="1" fill="#a80000"/>
<text x="1120" y="271" fill="#ff3232" font-size="12" text-anchor="end" textLength="23" lengthAdjust="spacingAndGlyphs">8.00</text>
<rect x="1076" y="294" width="2" height="1" fill="#a80000"/>
<text x="1120" y="299" fill="#ff3232" font-size="12" text-anchor="end" textLength="23" lengthAdjust="spacingAndGlyphs">7.75</text>
<rect x="1076" y="322" width="5" height="1" fill="#a80000"/>
<text x="1120" y="327" fill="#ff3232" font-size="12" text-anchor="end" textLength="23" lengthAdjust="spacingAndGlyphs">7.50</text>
<rect x="1076" y="350" width="2" height="1" fill="#a80000"/>
<text x="1120" y="355" fill="#ff3232" font-size="12" text-anchor="end" textLength="23" lengthAdjust="spacingAndGlyphs">7.25</text>
<rect x="1076" y="379" width="5" height="1" fill="#a80000"/>
<text x="1120" y="384" fill="#ff3232" font-size="12" text-anchor="end" textLength="23" lengthAdjust="spacingAndGlyphs">7.00</text>
<rect x="0" y="396" width="1130" height="1" fill="#a80000"/>
<rect x="1075" y="397" width="52" height="1" fill="#a80000"/>
<rect x="1076" y="397" width="1" height="203" fill="#a80000"/>
<rect x="1125" y="397" width="1" height="203" fill="#a80000"/>
<rect x="1076" y="457" width="5" height="1" fill="#a80000"/>
<text x="1120" y="462.5" fill="#ff3232" font-size="12" text-anchor="end" textLength="30" lengthAdjust="spacingAndGlyphs">100.0</text>
<rect x="1076" y="491" width="2" height="1" fill="#a80000"/>
<text x="1120" y="497" fill="#ff3232" font-size="12" text-anchor="end" textLength="30" lengthAdjust="spacingAndGlyphs">75.00</text>
<rect x="1076" y="525" width="5" height="1" fill="#a80000"/>
<text x="1120" y="530.5" fill="#ff3232" font-size="12" text-anchor="end" textLength="30" lengthAdjust="spacingAndGlyphs">50.00</text>
<rect x="1077" y="507" width="48" height="17" fill="#a80000"/>
<rect x="1077" y="508" width="48" height="15" fill="#000080"/>
<text x="1077.5" y="518.5" fill="#e0e0e0" font-size="12" textLength="28.5" lengthAdjust="spacingAndGlyphs">51.63</text>
<path d="M13,41.5 H18 M18,42.5 H21 M21,43.5 H24" stroke="#c8c8c8" stroke-width="1" shape-rendering="crispEdges"/>
<polyline points="15.5,39 13.5,41.5 15.5,44" fill="none" stroke="#c8c8c8" stroke-width="1"/>
<text x="26" y="49.5" fill="#c8c8c8" font-size="12" textLength="30" lengthAdjust="spacingAndGlyphs">10.00</text>
<path d="M739,377.5 H751" stroke="#d0d0d0" stroke-width="1" shape-rendering="crispEdges"/>
<polyline points="742.5,375 739.5,377.5 742.5,380.5" fill="none" stroke="#d0d0d0" stroke-width="1"/>
<text x="752" y="382.5" fill="#c8c8c8" font-size="12" textLength="23" lengthAdjust="spacingAndGlyphs">7.01</text>
<path d="M13,382H23L26,385V395H13Z" fill="#008000"/><text x="13.5" y="392.5" fill="#ffffff" font-size="12" font-weight="bold" textLength="12" lengthAdjust="spacingAndGlyphs">跌</text>
<path d="M821,382H827L830,385V395H821Z" fill="#800000"/><text x="821.5" y="392.5" fill="#ffffff" font-size="12" font-weight="bold" textLength="8" lengthAdjust="spacingAndGlyphs">引</text>
<path d="M830,382H839L842,385V395H830Z" fill="#a05000"/><text x="830.5" y="392.5" fill="#ffffff" font-size="12" font-weight="bold" textLength="11" lengthAdjust="spacingAndGlyphs">榜</text>
<path d="M878,382H888L891,385V395H878Z" fill="#1f3f7f"/><text x="878.5" y="392.5" fill="#ffffff" font-size="12" font-weight="bold" textLength="12" lengthAdjust="spacingAndGlyphs">财</text>
<path d="M992,382H1002L1005,385V395H992Z" fill="#008000"/><text x="992.5" y="392.5" fill="#ffffff" font-size="12" font-weight="bold" textLength="12" lengthAdjust="spacingAndGlyphs">减</text>
<circle cx="8" cy="405" r="6.2" fill="#808080"/>
<polyline points="4.8,403.6 8,406.6 11.2,403.6" fill="none" stroke="#1a1a1a" stroke-width="1"/>
<text x="18" y="408.5" fill="#c8c8c8" font-size="12" textLength="59" lengthAdjust="spacingAndGlyphs">股朋指标网</text>
<text x="84" y="408.5" fill="#ff0000" font-size="12" textLength="59" lengthAdjust="spacingAndGlyphs">价牛: 67.62</text>
<text x="150" y="408.5" fill="#c8c8ff" font-size="12" textLength="59" lengthAdjust="spacingAndGlyphs">中軌: 54.89</text>
<text x="215" y="408.5" fill="#00ff00" font-size="12" textLength="79" lengthAdjust="spacingAndGlyphs">天牛軌: 124.89</text>
<text x="300" y="408.5" fill="#00ff00" font-size="12" textLength="75" lengthAdjust="spacingAndGlyphs">地牛軌: -15.11</text>
<text x="383" y="408.5" fill="#ff00ff" font-size="12" textLength="81" lengthAdjust="spacingAndGlyphs">上上軌: 104.89</text>
<text x="468" y="408.5" fill="#ff00ff" font-size="12" textLength="65" lengthAdjust="spacingAndGlyphs">下下軌: 4.89</text>
<text x="539" y="408.5" fill="#ffff00" font-size="12" textLength="58" lengthAdjust="spacingAndGlyphs">上軌: 79.89</text>
<text x="604" y="408.5" fill="#ffff00" font-size="12" textLength="60" lengthAdjust="spacingAndGlyphs">下軌: 29.89</text>
<text x="670" y="408.5" fill="#0000ff" font-size="12" textLength="59" lengthAdjust="spacingAndGlyphs">量牛: 62.11</text>
<text x="736" y="408.5" fill="#3399ff" font-size="12" textLength="60" lengthAdjust="spacingAndGlyphs">筹牛: 13.50</text>
<text x="3" y="441.5" fill="#505050" font-size="12" textLength="38" lengthAdjust="spacingAndGlyphs">HTTP://</text>
<rect x="0" y="630" width="1075" height="1" fill="#a80000"/>
<rect x="0" y="646" width="1130" height="1" fill="#a80000"/>
<rect x="91" y="630" width="1" height="16" fill="#a80000"/>
<rect x="253" y="630" width="1" height="16" fill="#a80000"/>
<rect x="439" y="630" width="1" height="16" fill="#a80000"/>
<rect x="609" y="630" width="1" height="16" fill="#a80000"/>
<rect x="787" y="630" width="1" height="16" fill="#a80000"/>
<rect x="924" y="630" width="1" height="16" fill="#a80000"/>
<rect x="133" y="631" width="1" height="2" fill="#a80000"/>
<rect x="173" y="631" width="1" height="2" fill="#a80000"/>
<rect x="213" y="631" width="1" height="2" fill="#a80000"/>
<rect x="300" y="631" width="1" height="2" fill="#a80000"/>
<rect x="347" y="631" width="1" height="2" fill="#a80000"/>
<rect x="394" y="631" width="1" height="2" fill="#a80000"/>
<rect x="482" y="631" width="1" height="2" fill="#a80000"/>
<rect x="524" y="631" width="1" height="2" fill="#a80000"/>
<rect x="567" y="631" width="1" height="2" fill="#a80000"/>
<rect x="655" y="631" width="1" height="2" fill="#a80000"/>
<rect x="698" y="631" width="1" height="2" fill="#a80000"/>
<rect x="743" y="631" width="1" height="2" fill="#a80000"/>
<rect x="822" y="631" width="1" height="2" fill="#a80000"/>
<rect x="856" y="631" width="1" height="2" fill="#a80000"/>
<rect x="890" y="631" width="1" height="2" fill="#a80000"/>
<text x="5" y="644" fill="#ff3232" font-size="12" textLength="38" lengthAdjust="spacingAndGlyphs">2025年</text>
<text x="93" y="644" fill="#ff3232" font-size="12" textLength="6" lengthAdjust="spacingAndGlyphs">6</text>
<text x="255" y="644" fill="#ff3232" font-size="12" textLength="6" lengthAdjust="spacingAndGlyphs">7</text>
<text x="441" y="644" fill="#ff3232" font-size="12" textLength="6" lengthAdjust="spacingAndGlyphs">8</text>
<text x="611" y="644" fill="#ff3232" font-size="12" textLength="6" lengthAdjust="spacingAndGlyphs">9</text>
<text x="789" y="644" fill="#ff3232" font-size="12" textLength="12" lengthAdjust="spacingAndGlyphs">10</text>
<text x="926" y="644" fill="#ff3232" font-size="12" textLength="12" lengthAdjust="spacingAndGlyphs">11</text>
<rect x="0" y="646" width="1" height="4" fill="#a80000"/>
<rect x="42" y="646" width="1" height="4" fill="#a80000"/>
<rect x="73" y="646" width="1" height="4" fill="#a80000"/>
<rect x="115" y="646" width="1" height="4" fill="#a80000"/>
<rect x="145" y="646" width="1" height="4" fill="#a80000"/>
<rect x="177" y="646" width="1" height="4" fill="#a80000"/>
<rect x="208" y="646" width="1" height="4" fill="#a80000"/>
<rect x="241" y="646" width="1" height="4" fill="#a80000"/>
<rect x="282" y="646" width="1" height="4" fill="#a80000"/>
<rect x="308" y="646" width="1" height="4" fill="#a80000"/>
<rect x="332" y="646" width="1" height="4" fill="#a80000"/>
<rect x="364" y="646" width="1" height="4" fill="#a80000"/>
<rect x="390" y="646" width="1" height="4" fill="#a80000"/>
<rect x="422" y="646" width="1" height="4" fill="#a80000"/>
<rect x="480" y="646" width="1" height="4" fill="#a80000"/>
<rect x="508" y="646" width="1" height="4" fill="#a80000"/>
<rect x="536" y="646" width="1" height="4" fill="#a80000"/>
<rect x="568" y="646" width="1" height="4" fill="#a80000"/>
<rect x="599" y="646" width="1" height="4" fill="#a80000"/>
<rect x="628" y="646" width="1" height="4" fill="#a80000"/>
<rect x="663" y="646" width="1" height="4" fill="#a80000"/>
<rect x="696" y="646" width="1" height="4" fill="#a80000"/>
<rect x="735" y="646" width="1" height="4" fill="#a80000"/>
<rect x="766" y="646" width="1" height="4" fill="#a80000"/>
<rect x="807" y="646" width="1" height="4" fill="#a80000"/>
<rect x="839" y="646" width="1" height="4" fill="#a80000"/>
<rect x="871" y="646" width="1" height="4" fill="#a80000"/>
<rect x="1127" y="25" width="3" height="1" fill="#a80000"/>
<rect x="1127" y="45" width="3" height="1" fill="#a80000"/>
<rect x="1127" y="418" width="3" height="1" fill="#a80000"/>
<rect x="1127" y="437" width="3" height="1" fill="#a80000"/>
<rect x="1128" y="31" width="2" height="1" fill="#b0b0b0"/>
<rect x="1128" y="35" width="2" height="1" fill="#b0b0b0"/>
<rect x="1128" y="38" width="2" height="1" fill="#b0b0b0"/>
<rect x="1128" y="60" width="2" height="1" fill="#b0b0b0"/>
<rect x="1128" y="78" width="2" height="1" fill="#b0b0b0"/>
<rect x="1128" y="97" width="2" height="1" fill="#b0b0b0"/>
<rect x="1128" y="116" width="2" height="1" fill="#b0b0b0"/>
<rect x="1128" y="135" width="2" height="1" fill="#b0b0b0"/>
<rect x="1128" y="154" width="2" height="1" fill="#b0b0b0"/>
<rect x="1128" y="173" width="2" height="1" fill="#b0b0b0"/>
<rect x="1128" y="192" width="2" height="1" fill="#b0b0b0"/>
<rect x="1128" y="211" width="2" height="1" fill="#b0b0b0"/>
<rect x="1128" y="230" width="2" height="1" fill="#b0b0b0"/>
<rect x="1128" y="249" width="2" height="1" fill="#b0b0b0"/>
<rect x="1128" y="268" width="2" height="1" fill="#b0b0b0"/>
<rect x="1128" y="287" width="2" height="1" fill="#b0b0b0"/>
<rect x="1128" y="306" width="2" height="1" fill="#b0b0b0"/>
<rect x="1128" y="325" width="2" height="1" fill="#b0b0b0"/>
<rect x="1128" y="344" width="2" height="1" fill="#b0b0b0"/>
<rect x="1128" y="363" width="2" height="1" fill="#b0b0b0"/>
<rect x="1128" y="382" width="2" height="1" fill="#b0b0b0"/>
<rect x="1128" y="422" width="2" height="1" fill="#b0b0b0"/>
<rect x="1128" y="434" width="2" height="1" fill="#b0b0b0"/>
<rect x="1128" y="444" width="2" height="1" fill="#b0b0b0"/>
<rect x="1128" y="461" width="2" height="1" fill="#b0b0b0"/>
<rect x="1128" y="480" width="2" height="1" fill="#b0b0b0"/>
<rect x="1128" y="499" width="2" height="1" fill="#b0b0b0"/>
<rect x="1128" y="518" width="2" height="1" fill="#b0b0b0"/>
<rect x="1128" y="537" width="2" height="1" fill="#b0b0b0"/>
<rect x="1128" y="556" width="2" height="1" fill="#b0b0b0"/>
<rect x="1128" y="575" width="2" height="1" fill="#b0b0b0"/>
<rect x="1128" y="594" width="2" height="1" fill="#b0b0b0"/>
<rect x="984" y="600" width="146" height="50" fill="#000"/>
<text x="1017" y="621" fill="#ffffff" font-size="18" font-weight="bold" textLength="90" lengthAdjust="spacingAndGlyphs">股朋指标网</text>
<text x="991" y="639.5" fill="#e8e8e8" font-size="16" textLength="133" lengthAdjust="spacingAndGlyphs">www.7gpzb.com</text>
</svg>
</body></html>
